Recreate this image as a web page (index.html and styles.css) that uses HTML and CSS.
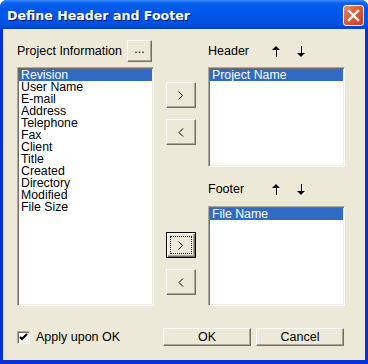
FILE: index.html
```html
<!DOCTYPE html>
<html lang="en">
  <head>
    <meta charset="UTF-8" />
    <title>Define Header and Footer</title>
    <link rel="stylesheet" href="styles.css">
  </head>
  <body>
    <div class="window">
      <div class="titlebar">
        <span class="title">Define Header and Footer</span>
        <div class="close">
          <svg width="13" height="13" viewBox="0 0 13 13">
            <path d="M2 2 L11 11 M11 2 L2 11" stroke="#fff" stroke-width="2.4" stroke-linecap="square" />
          </svg>
        </div>
      </div>
      <div class="client">
        <div class="main">
          <div class="col">
            <div class="label-row">
              <span>Project Information</span>
              <button class="btn dots">...</button>
            </div>
            <div class="listbox tall">
              <div class="item selected">Revision</div>
              <div class="item">User Name</div>
              <div class="item">E-mail</div>
              <div class="item">Address</div>
              <div class="item">Telephone</div>
              <div class="item">Fax</div>
              <div class="item">Client</div>
              <div class="item">Title</div>
              <div class="item">Created</div>
              <div class="item">Directory</div>
              <div class="item">Modified</div>
              <div class="item">File Size</div>
            </div>
          </div>

          <div class="col mid">
            <button class="btn move first">
              <svg width="6" height="9" viewBox="0 0 6 9"><path d="M0.5 0.5 L4.5 4.5 L0.5 8.5" stroke="#000" fill="none" /></svg>
            </button>
            <button class="btn move">
              <svg width="6" height="9" viewBox="0 0 6 9"><path d="M5 0.5 L1 4.5 L5 8.5" stroke="#000" fill="none" /></svg>
            </button>
            <button class="btn move focused second">
              <span class="focus">
                <svg width="6" height="9" viewBox="0 0 6 9"><path d="M0.5 0.5 L4.5 4.5 L0.5 8.5" stroke="#000" fill="none" /></svg>
              </span>
            </button>
            <button class="btn move">
              <svg width="6" height="9" viewBox="0 0 6 9"><path d="M5 0.5 L1 4.5 L5 8.5" stroke="#000" fill="none" /></svg>
            </button>
          </div>

          <div class="col">
            <div class="label-row">
              <span class="name">Header</span>
              <svg class="arrow" width="10" height="12" viewBox="0 0 10 12">
                <path d="M5 1 L9 5 L6 5 L6 12 L5 12 L5 5 L1 5 Z" fill="#fff" />
                <path d="M4 0 L8 4 L5 4 L5 11 L4 11 L4 4 L0 4 Z" fill="#000" />
              </svg>
              <svg class="arrow" width="10" height="12" viewBox="0 0 10 12">
                <path d="M5 1 L6 1 L6 8 L9 8 L5 12 L1 8 L5 8 Z" fill="#fff" />
                <path d="M4 0 L5 0 L5 7 L8 7 L4 11 L0 7 L4 7 Z" fill="#000" />
              </svg>
            </div>
            <div class="listbox short">
              <div class="item selected">Project Name</div>
            </div>
            <div class="label-row footer-row">
              <span class="name">Footer</span>
              <svg class="arrow" width="10" height="12" viewBox="0 0 10 12">
                <path d="M5 1 L9 5 L6 5 L6 12 L5 12 L5 5 L1 5 Z" fill="#fff" />
                <path d="M4 0 L8 4 L5 4 L5 11 L4 11 L4 4 L0 4 Z" fill="#000" />
              </svg>
              <svg class="arrow" width="10" height="12" viewBox="0 0 10 12">
                <path d="M5 1 L6 1 L6 8 L9 8 L5 12 L1 8 L5 8 Z" fill="#fff" />
                <path d="M4 0 L5 0 L5 7 L8 7 L4 11 L0 7 L4 7 Z" fill="#000" />
              </svg>
            </div>
            <div class="listbox short">
              <div class="item selected">File Name</div>
            </div>
          </div>
        </div>

        <div class="bottom">
          <label class="check">
            <span class="box">
              <svg width="9" height="9" viewBox="0 0 9 9">
                <path d="M1 4 L3 6 L8 1" stroke="#000" stroke-width="2" fill="none" />
              </svg>
            </span>
            Apply upon OK
          </label>
          <div class="actions">
            <button class="btn wide ok">OK</button>
            <button class="btn wide">Cancel</button>
          </div>
        </div>
      </div>
    </div>
  </body>
</html>
```

FILE: styles.css
```css
body {
  margin: 0;
  background: #ffffff;
  font-family: "Liberation Sans", Arial, sans-serif;
  font-size: 12.5px;
  color: #000000;
}
.window {
  width: 368px;
  height: 364px;
  display: flex;
  flex-direction: column;
  border-radius: 7px 7px 0 0;
  overflow: hidden;
  background: #0831d9;
}
.titlebar {
  height: 29px;
  flex: none;
  display: flex;
  align-items: center;
  padding: 0 4px 0 7px;
  background: linear-gradient(to bottom, #3d8bff 0, #0a61ec 3px, #0058ee 8px, #0055ea 18px, #0050e0 25px, #003dd0 29px);
}
.title {
  flex: 1;
  font-family: "DejaVu Sans", Verdana, sans-serif;
  font-weight: bold;
  font-size: 12.6px;
  color: #ffffff;
  text-shadow: 1px 1px 0 #0a1a6a;
  padding-top: 1px;
}
.close {
  width: 21px;
  height: 21px;
  box-sizing: border-box;
  border: 1px solid #ffffff;
  border-radius: 3px;
  background: linear-gradient(135deg, #f08a6c 0, #e05a33 45%, #c8401c 100%);
  display: flex;
  align-items: center;
  justify-content: center;
  margin-top: 1px;
}
.client {
  flex: 1;
  margin: 0 3px 4px 3px;
  background: #ece9d8;
  padding: 11px 0 0 14px;
  display: flex;
  flex-direction: column;
}
.main {
  display: flex;
  gap: 12px;
}
.col {
  width: 137px;
  display: flex;
  flex-direction: column;
}
.col.mid {
  width: 30px;
  padding-top: 42px;
}
.label-row {
  height: 22px;
  display: flex;
  align-items: center;
  margin-bottom: 5px;
}
.label-row .name {
  width: 64px;
}
.footer-row {
  margin-top: 11px;
  margin-bottom: 6px;
}
.arrow {
  margin-right: 15px;
  margin-top: 1px;
}
.btn {
  font-family: "Liberation Sans", Arial, sans-serif;
  font-size: 12.5px;
  color: #000000;
  background: #ece9d8;
  box-sizing: border-box;
  border: 1px solid;
  border-color: #ffffff #716f64 #716f64 #ffffff;
  box-shadow: inset -1px -1px 0 #aca899;
  padding: 0;
  margin: 0;
  display: flex;
  align-items: center;
  justify-content: center;
}
.dots {
  width: 25px;
  height: 22px;
  margin-left: 5px;
  padding-bottom: 4px;
}
.move {
  width: 30px;
  height: 26px;
  margin-bottom: 11px;
}
.move.second {
  margin-top: 76px;
}
.focused {
  border-color: #000000;
  box-shadow: inset 1px 1px 0 #ffffff, inset -1px -1px 0 #716f64, inset -2px -2px 0 #aca899;
}
.focus {
  width: 22px;
  height: 18px;
  box-sizing: border-box;
  border: 1px dotted #000000;
  display: flex;
  align-items: center;
  justify-content: center;
}
.listbox {
  box-sizing: border-box;
  background: #ffffff;
  border: 1px solid;
  border-color: #aca899 #ffffff #ffffff #aca899;
  box-shadow: inset 1px 1px 0 #716f64, inset -1px -1px 0 #f1efe2;
  padding: 1px;
}
.listbox.tall {
  height: 239px;
}
.listbox.short {
  height: 100px;
}
.item {
  height: 12px;
  line-height: 12px;
  font-size: 12.3px;
  padding-left: 2px;
  white-space: nowrap;
}
.item.selected {
  background: #316ac5;
  color: #ffffff;
}
.bottom {
  margin-top: 22px;
  display: flex;
  align-items: center;
  width: 327px;
}
.check {
  flex: 1;
  display: flex;
  align-items: center;
  gap: 6px;
}
.box {
  width: 13px;
  height: 13px;
  box-sizing: border-box;
  background: #ffffff;
  border: 1px solid;
  border-color: #aca899 #ffffff #ffffff #aca899;
  box-shadow: inset 1px 1px 0 #716f64, inset -1px -1px 0 #f1efe2;
  display: flex;
  align-items: center;
  justify-content: center;
}
.actions {
  display: flex;
  gap: 5px;
}
.wide {
  width: 88px;
  height: 18px;
}
```
